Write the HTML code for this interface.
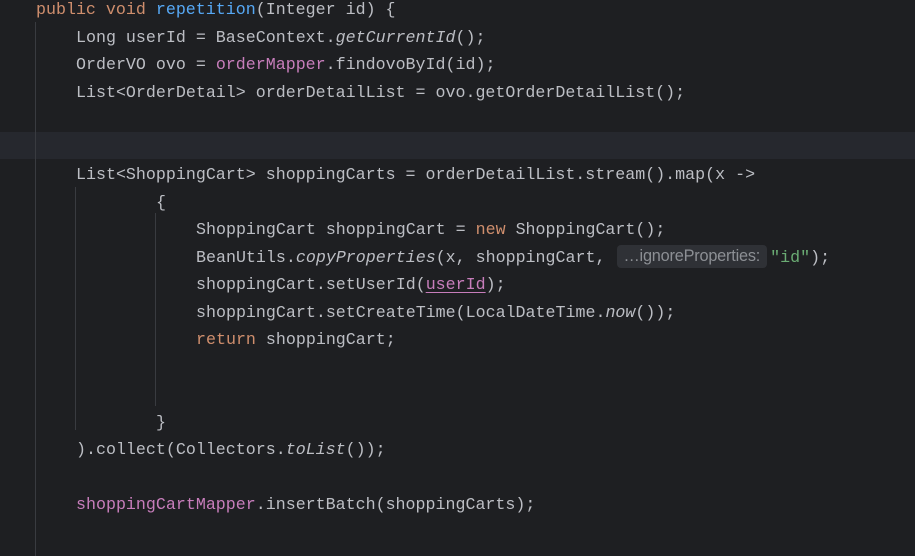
<!DOCTYPE html>
<html><head><meta charset="utf-8"><style>
body{margin:0;width:915px;height:556px;background:#1e1f22;overflow:hidden;position:relative;font-family:"Liberation Mono",monospace;font-size:16.65px;color:#bcbec4}
.l{position:absolute;left:0;height:27.5px;line-height:27.5px;white-space:pre}
.k{color:#cf8e6d}.f{color:#56a8f5}.p{color:#c77dbb}.i{font-style:italic}.s{color:#6aab73}
.u{color:#c77dbb;text-decoration:underline;text-underline-offset:3px}
.g{position:absolute;width:1px;background:#393b40}
.hl{position:absolute;left:0;top:132px;width:915px;height:27px;background:#26282e}
.h{display:inline-block;background:#2f3136;color:#8c8f94;font-family:"Liberation Sans",sans-serif;font-size:16.3px;line-height:23px;border-radius:4px;padding:0 7px 0 6px;margin:0 3px 0 12px;vertical-align:1px;letter-spacing:-0.2px}
</style></head><body>
<div class="hl"></div>
<div class="g" style="left:35px;top:22px;height:534px"></div>
<div class="g" style="left:75px;top:187px;height:243px"></div>
<div class="g" style="left:155px;top:213px;height:193px"></div>
<div class="l" style="top:-4px;left:36px"><span class="k">public void </span><span class="f">repetition</span>(Integer id) {</div>
<div class="l" style="top:23.5px;left:76px">Long userId = BaseContext.<span class="i">getCurrentId</span>();</div>
<div class="l" style="top:51px;left:76px">OrderVO ovo = <span class="p">orderMapper</span>.findovoById(id);</div>
<div class="l" style="top:78.5px;left:76px">List&lt;OrderDetail&gt; orderDetailList = ovo.getOrderDetailList();</div>
<div class="l" style="top:161px;left:76px">List&lt;ShoppingCart&gt; shoppingCarts = orderDetailList.stream().map(x -&gt;</div>
<div class="l" style="top:188.5px;left:156px">{</div>
<div class="l" style="top:216px;left:196px">ShoppingCart shoppingCart = <span class="k">new </span>ShoppingCart();</div>
<div class="l" style="top:243.5px;left:196px">BeanUtils.<span class="i">copyProperties</span>(x, shoppingCart,<span class="h">…ignoreProperties:</span><span class="s">"id"</span>);</div>
<div class="l" style="top:271px;left:196px">shoppingCart.setUserId(<span class="u">userId</span>);</div>
<div class="l" style="top:298.5px;left:196px">shoppingCart.setCreateTime(LocalDateTime.<span class="i">now</span>());</div>
<div class="l" style="top:326px;left:196px"><span class="k">return </span>shoppingCart;</div>
<div class="l" style="top:408.5px;left:156px">}</div>
<div class="l" style="top:436px;left:76px">).collect(Collectors.<span class="i">toList</span>());</div>
<div class="l" style="top:491px;left:76px"><span class="p">shoppingCartMapper</span>.insertBatch(shoppingCarts);</div>
</body></html>
